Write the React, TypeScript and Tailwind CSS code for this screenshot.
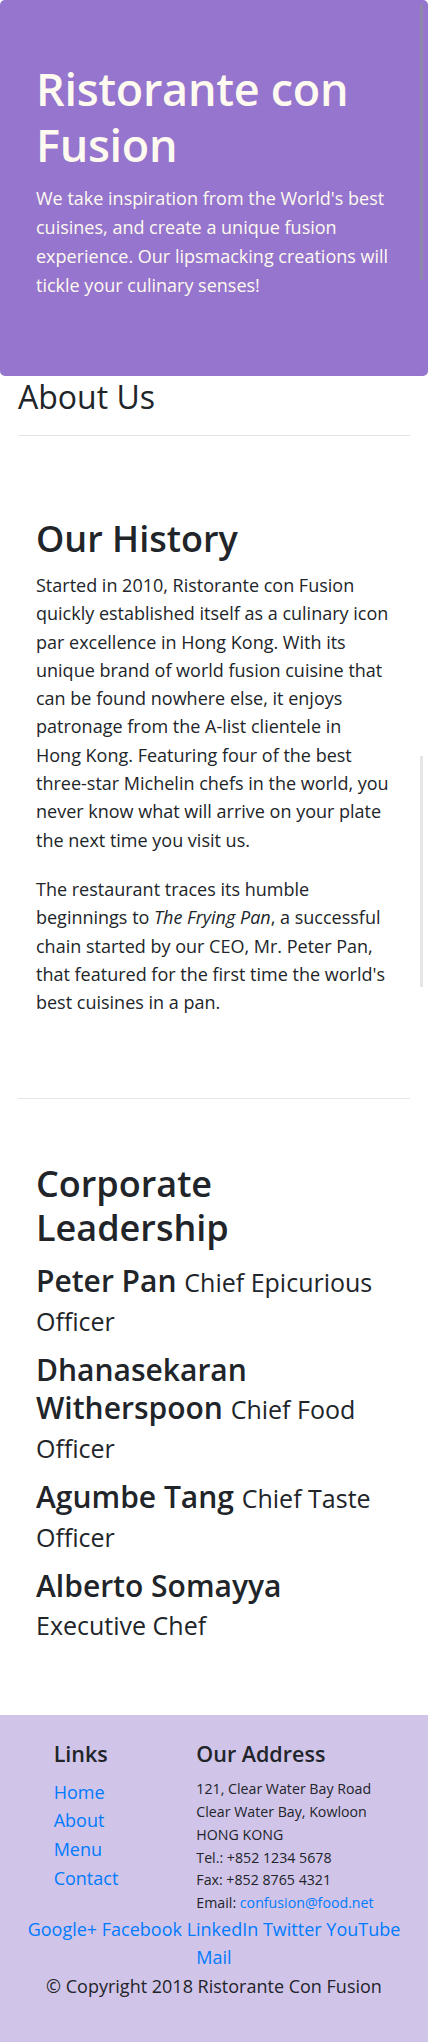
import React from "react";

// Leadership team entries
const LEADERS = [
  { name: "Peter Pan", title: "Chief Epicurious Officer" },
  { name: "Dhanasekaran Witherspoon", title: "Chief Food Officer" },
  { name: "Agumbe Tang", title: "Chief Taste Officer" },
  { name: "Alberto Somayya", title: "Executive Chef" },
];

const LINKS = ["Home", "About", "Menu", "Contact"];

const SOCIAL = ["Google+", "Facebook", "LinkedIn", "Twitter", "YouTube", "Mail"];

export default function App() {
  return (
    <div className="relative w-[428px] bg-white text-[#212529] font-['Open_Sans',sans-serif]">
      {/* Jumbotron */}
      <header className="bg-[#9575cd] rounded-[5px] px-[36px] pt-[61px] pb-[76px] text-[#fffaf0]">
        <h1 className="text-[45px] leading-[56px] font-semibold tracking-[-0.3px]">
          Ristorante con Fusion
        </h1>
        <p className="mt-[11px] text-[18px] leading-[29px]">
          We take inspiration from the World's best cuisines, and create a unique
          fusion experience. Our lipsmacking creations will tickle your culinary
          senses!
        </p>
      </header>

      <main className="px-[18px]">
        <h3 className="mt-[3px] text-[32px] leading-[36px] font-medium">About Us</h3>
        <hr className="mt-[20px] border-[#e5e5e5]" />

        {/* History */}
        <section className="px-[18px] pt-[81px] pb-[82px]">
          <h2 className="text-[36px] leading-[44px] font-semibold">Our History</h2>
          <p className="mt-[10px] text-[18px] leading-[28.3px]">
            Started in 2010, Ristorante con Fusion quickly established itself as a
            culinary icon par excellence in Hong&nbsp;Kong. With its unique brand of
            world fusion cuisine that can be found nowhere else, it enjoys patronage
            from the A-list clientele in Hong&nbsp;Kong. Featuring four of the best
            three-star Michelin chefs in the world, you never know what will arrive
            on your plate the next time you visit us.
          </p>
          <p className="mt-[21px] text-[18px] leading-[28.3px]">
            The restaurant traces its humble beginnings to <em>The Frying Pan</em>, a
            successful chain started by our CEO, Mr. Peter Pan, that featured for the
            first time the world's best cuisines in a pan.
          </p>
        </section>
        <hr className="border-[#e5e5e5]" />

        {/* Leadership */}
        <section className="px-[18px] pt-[63px] pb-[71px]">
          <h2 className="text-[36px] leading-[44px] font-semibold">
            Corporate Leadership
          </h2>
          <div className="mt-[12px] flex flex-col gap-[11px]">
            {LEADERS.map((l) => (
              <h3 key={l.name} className="text-[30px] leading-[38px] font-semibold">
                {l.name} <small className="text-[25px] font-normal">{l.title}</small>
              </h3>
            ))}
          </div>
        </section>
      </main>

      {/* Footer */}
      <footer className="bg-[#d1c4e9] pt-[25px] pb-[41px]">
        <div className="grid grid-cols-12">
          <div className="col-start-2 col-span-4 px-[18px]">
            <h5 className="text-[21.5px] leading-[28px] font-semibold">Links</h5>
            <ul className="mt-[9.3px] text-[18px] leading-[28.7px]">
              {LINKS.map((item) => (
                <li key={item}>
                  <a href="#" className="text-[#007bff]">
                    {item}
                  </a>
                </li>
              ))}
            </ul>
          </div>
          <div className="col-span-7 px-[18px]">
            <h5 className="text-[21.5px] leading-[28px] font-semibold">Our Address</h5>
            <address className="mt-[10px] not-italic text-[14.2px] leading-[22.7px]">
              121, Clear Water Bay Road
              <br />
              Clear Water Bay, Kowloon
              <br />
              HONG KONG
              <br />
              Tel.: +852 1234 5678
              <br />
              Fax: +852 8765 4321
              <br />
              Email:{" "}
              <a href="#" className="text-[#007bff]">
                confusion@food.net
              </a>
            </address>
          </div>
        </div>
        <div className="px-[18px] text-center text-[18px] leading-[28.7px]">
          {SOCIAL.map((s, i) => (
            <React.Fragment key={s}>
              <a href="#" className="text-[#007bff]">
                {s}
              </a>
              {i < SOCIAL.length - 1 ? " " : null}
            </React.Fragment>
          ))}
        </div>
        <p className="text-center text-[18px] leading-[28.7px]">
          © Copyright 2018 Ristorante Con Fusion
        </p>
      </footer>

      {/* scrollbar thumbs over the content */}
      <div className="absolute left-[420px] top-[4px] w-[3px] h-[276px] bg-[#8f87a8]" />
      <div className="absolute left-[420px] top-[756px] w-[3px] h-[231px] bg-[#e6e6e6]" />
    </div>
  );
}
